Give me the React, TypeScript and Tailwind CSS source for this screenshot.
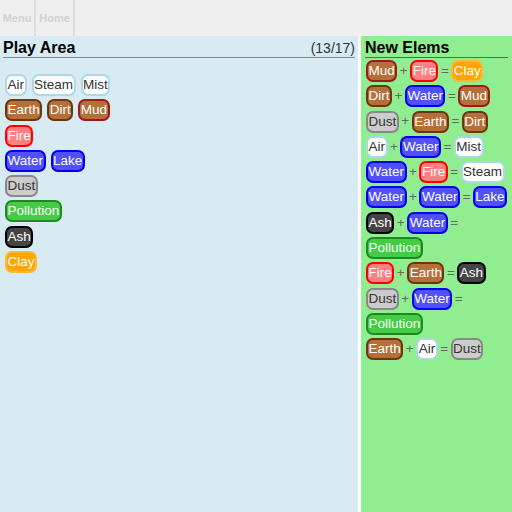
const styles: Record<string, string> = {
  Air: "bg-white border-[#add8e6] text-[#333]",
  Steam: "bg-white border-[#add8e6] text-[#333]",
  Mist: "bg-white border-[#add8e6] text-[#333]",
  Earth: "bg-[#b5703a] border-[#6b3510] text-white",
  Dirt: "bg-[#b5703a] border-[#6b3510] text-white",
  Mud: "bg-[#b5703a] border-[#a01818] text-white",
  Fire: "bg-[#ff8080] border-[#ff0000] text-white",
  Water: "bg-[#5050ff] border-[#0000ee] text-white",
  Lake: "bg-[#5050ff] border-[#0000ee] text-white",
  Dust: "bg-[#cccccc] border-[#888888] text-[#333]",
  Pollution: "bg-[#44cc44] border-[#1f8a1f] text-white",
  Ash: "bg-[#444444] border-[#000000] text-white",
  Clay: "bg-[#ffa500] border-[#ffb833] text-white",
};

function Elem({ name }: { name: string }) {
  return (
    <span
      className={`inline-block rounded-[7px] border-2 px-[0.5px] py-px text-[13.5px] leading-[16px] ${styles[name]}`}
    >
      {name}
    </span>
  );
}

const playRows = [
  ["Air", "Steam", "Mist"],
  ["Earth", "Dirt", "Mud"],
  ["Fire"],
  ["Water", "Lake"],
  ["Dust"],
  ["Pollution"],
  ["Ash"],
  ["Clay"],
];

const recipes: [string, string, string, boolean?][] = [
  ["Mud", "Fire", "Clay"],
  ["Dirt", "Water", "Mud"],
  ["Dust", "Earth", "Dirt"],
  ["Air", "Water", "Mist"],
  ["Water", "Fire", "Steam"],
  ["Water", "Water", "Lake"],
  ["Ash", "Water", "Pollution", true],
  ["Fire", "Earth", "Ash"],
  ["Dust", "Water", "Pollution", true],
  ["Earth", "Air", "Dust"],
];

function Op({ c }: { c: string }) {
  return <span className="mx-[2.5px] text-[13.5px] text-[#666]">{c}</span>;
}

export default function App() {
  return (
    <div className="flex h-[512px] flex-col bg-white font-['Liberation_Sans',Arial,sans-serif]">
      <div className="flex h-9 shrink-0 bg-[#efefef]">
        <button className="w-9 border-r-2 border-[#dcdcdc] text-[11px] font-bold text-[#d2d2d2]">Menu</button>
        <button className="w-[39px] border-r-2 border-[#dcdcdc] text-[11px] font-bold text-[#d2d2d2]">Home</button>
      </div>
      <div className="flex flex-1">
        <div className="w-[358px] shrink-0 bg-[#d8ebf2] px-[3px]">
          <div className="flex items-end justify-between border-b border-[#808890] pt-[2px]">
            <h2 className="text-[16px] font-bold leading-[19px] text-black">Play Area</h2>
            <span className="text-[14px] leading-[17px] text-[#333]">(13/17)</span>
          </div>
          <div className="mt-4 flex flex-col gap-[3.3px] pl-[2px]">
            {playRows.map((r, i) => (
              <div key={i} className="flex gap-[5px]">
                {r.map((n) => (
                  <Elem key={n} name={n} />
                ))}
              </div>
            ))}
          </div>
        </div>
        <div className="ml-[3px] w-[151px] shrink-0 bg-[#90ee90] px-1">
          <h2 className="border-b border-[#5a6a5a] pt-[2px] text-[16px] font-bold leading-[19px] text-black">New Elems</h2>
          <div className="mt-[2px] flex flex-col gap-[3.3px] pl-px">
            {recipes.map(([a, b, c, wrap], i) =>
              wrap ? (
                <div key={i} className="flex flex-col gap-[3.3px]">
                  <div className="flex items-center">
                    <Elem name={a} />
                    <Op c="+" />
                    <Elem name={b} />
                    <Op c="=" />
                  </div>
                  <div className="flex">
                    <Elem name={c} />
                  </div>
                </div>
              ) : (
                <div key={i} className="flex items-center">
                  <Elem name={a} />
                  <Op c="+" />
                  <Elem name={b} />
                  <Op c="=" />
                  <Elem name={c} />
                </div>
              )
            )}
          </div>
        </div>
      </div>
    </div>
  );
}
